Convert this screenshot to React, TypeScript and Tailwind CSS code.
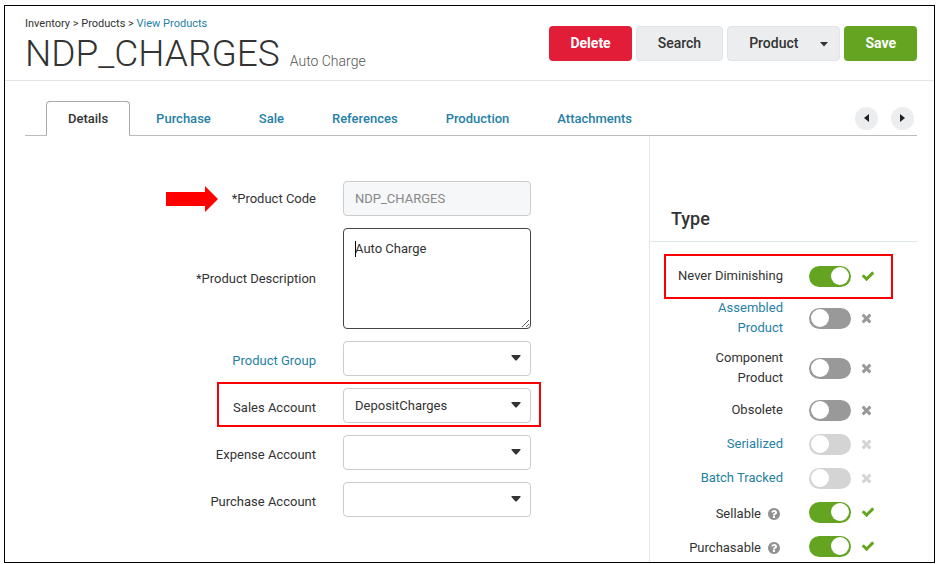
import { useState, type ReactNode } from "react";
import clsx from "clsx";

type TypeFlag = {
  id: string;
  label: string;
  on: boolean;
  link?: boolean;
  disabled?: boolean;
  help?: boolean;
  tall?: boolean;
  marked?: boolean;
};

const tabs = ["Details", "Purchase", "Sale", "References", "Production", "Attachments"];

const typeFlags: TypeFlag[] = [
  { id: "never-diminishing", label: "Never Diminishing", on: true, marked: true },
  { id: "assembled", label: "Assembled Product", on: false, link: true, tall: true },
  { id: "component", label: "Component Product", on: false, tall: true },
  { id: "obsolete", label: "Obsolete", on: false },
  { id: "serialized", label: "Serialized", on: false, link: true, disabled: true },
  { id: "batch-tracked", label: "Batch Tracked", on: false, link: true, disabled: true },
  { id: "sellable", label: "Sellable", on: true, help: true },
  { id: "purchasable", label: "Purchasable", on: true, help: true },
];

const accounts = [
  { id: "group", label: "Product Group", value: "", link: true },
  { id: "sales", label: "Sales Account", value: "DepositCharges", marked: true },
  { id: "expense", label: "Expense Account", value: "" },
  { id: "purchase", label: "Purchase Account", value: "" },
];

function CheckIcon() {
  return (
    <svg viewBox="0 0 1792 1792" className="size-[14px] fill-[#64a421]" aria-hidden="true">
      <path d="M1671 566q0 40-28 68l-724 724-136 136q-28 28-68 28t-68-28l-136-136-362-362q-28-28-28-68t28-68l136-136q28-28 68-28t68 28l294 295 656-657q28-28 68-28t68 28l136 136q28 28 28 68z" />
    </svg>
  );
}

function TimesIcon({ faded }: { faded?: boolean }) {
  return (
    <svg
      viewBox="192 0 1408 1792"
      className={clsx("h-[14px] w-[11px]", faded ? "fill-[#d4d4d4]" : "fill-[#999999]")}
      aria-hidden="true"
    >
      <path d="M1490 1322q0 40-28 68l-136 136q-28 28-68 28t-68-28l-294-294-294 294q-28 28-68 28t-68-28l-136-136q-28-28-28-68t28-68l294-294-294-294q-28-28-28-68t28-68l136-136q28-28 68-28t68 28l294 294 294-294q28-28 68-28t68 28l136 136q28 28 28 68t-28 68l-294 294 294 294q28 28 28 68z" />
    </svg>
  );
}

function HelpIcon() {
  return (
    <svg viewBox="128 128 1536 1536" className="mr-[3px] size-3 shrink-0 fill-[#919191]" aria-hidden="true">
      <path d="M1024 1376v-192q0-14-9-23t-23-9h-192q-14 0-23 9t-9 23v192q0 14 9 23t23 9h192q14 0 23-9t9-23zm256-672q0-88-55.500-163t-138.500-116-170-41q-243 0-371 213-15 24 8 42l132 100q7 6 19 6 16 0 25-12 53-68 86-92 34-24 86-24 48 0 85.500 26t37.500 59q0 38-20 61t-68 45q-63 28-115.500 86.500t-52.500 125.500v36q0 14 9 23t23 9h192q14 0 23-9t9-23q0-19 21.500-49.500t54.500-49.500q32-18 49-28.500t46-35 44.500-48 28-60.500 12.500-81zm384 192q0 209-103 385.500t-279.500 279.500-385.500 103-385.500-103-279.500-279.500-103-385.500 103-385.500 279.500-279.500 385.500-103 385.500 103 279.500 279.500 103 385.500z" />
    </svg>
  );
}

function Field({
  id,
  label,
  link,
  lead,
  labelClass,
  children,
}: {
  id: string;
  label: string;
  link?: boolean;
  lead?: ReactNode;
  labelClass?: string;
  children: ReactNode;
}) {
  return (
    <div className="relative flex items-center gap-[27px]">
      <div className={clsx("flex w-[291px] shrink-0 items-center justify-end gap-[14px]", labelClass)}>
        {lead}
        <label htmlFor={id} className={clsx("leading-5", link && "text-[#267fa5]")}>
          {label}
        </label>
      </div>
      {children}
    </div>
  );
}

function TypeRow({ flag, onToggle }: { flag: TypeFlag; onToggle: () => void }) {
  return (
    <li className={clsx("relative flex items-center pl-[21px]", flag.tall ? "h-10" : "h-6")}>
      <div className={clsx("flex w-28 items-center justify-end gap-[7px]", flag.help && "pt-[3px]")}>
        <label
          htmlFor={flag.id}
          className={clsx("text-right leading-5", flag.link && "text-[#267fa5]", flag.tall && "w-20")}
        >
          {flag.label}
        </label>
        {flag.help && <HelpIcon />}
      </div>
      <input
        id={flag.id}
        type="checkbox"
        role="switch"
        checked={flag.on}
        disabled={flag.disabled}
        onChange={onToggle}
        className="mr-[10px] ml-[26px] flex h-[21px] w-[42px] shrink-0 appearance-none items-center rounded-full bg-[#999999] px-[2px] before:size-[18px] before:rounded-full before:bg-white checked:justify-end checked:bg-[#64a421] disabled:bg-[#d4d4d4]"
      />
      {flag.on ? <CheckIcon /> : <TimesIcon faded={flag.disabled} />}
      {flag.marked && (
        <span className="pointer-events-none absolute -top-[10px] left-[14px] h-[45px] w-[229px] border-2 border-[#fb0000]" />
      )}
    </li>
  );
}

export default function App() {
  const [tab, setTab] = useState("Details");
  const [flags, setFlags] = useState(typeFlags);
  const [description, setDescription] = useState("Auto Charge");

  function toggle(id: string) {
    setFlags((fs) => fs.map((f) => (f.id === id ? { ...f, on: !f.on } : f)));
  }

  return (
    <div className="bg-white pt-[5px] pr-[3px] pb-px pl-1 font-['Roboto',sans-serif] text-[13px] text-[#333333]">
      <main className="border border-black">
        <header className="flex items-center justify-between border-b border-[#dfe5e9] pr-[17px] pl-5">
          <div className="pt-[10px] pb-1">
            <nav className="text-[11px] leading-4">
              Inventory &gt; Products &gt;{" "}
              <a href="#products" className="text-[#267fa5]">
                View Products
              </a>
            </nav>
            <div className="flex items-baseline gap-[10px]">
              <h1 className="text-[37px] leading-[44px] font-light">NDP_CHARGES</h1>
              <span className="text-sm font-light text-[#555555]">Auto Charge</span>
            </div>
          </div>
          <div className="flex gap-1 text-sm font-medium">
            <button type="button" className="h-[35px] rounded bg-[#e11d38] px-[21px] font-bold text-white">
              Delete
            </button>
            <button type="button" className="h-[35px] rounded border border-[#dfe5e9] bg-[#ecedef] px-[21px]">
              Search
            </button>
            <button
              type="button"
              className="flex h-[35px] items-center gap-[22px] rounded border border-[#dfe5e9] bg-[#ecedef] pr-[11px] pl-[21px]"
            >
              Product
              <svg viewBox="0 0 8 5" className="mt-[2px] h-[5px] w-2 fill-[#333333]" aria-hidden="true">
                <path d="M0 0h8L4 4.500z" />
              </svg>
            </button>
            <button type="button" className="h-[35px] rounded bg-[#64a421] px-[21px] font-bold text-white">
              Save
            </button>
          </div>
        </header>

        <div className="pt-5 pr-[17px] pl-5">
          <div className="flex items-center justify-between border-b border-[#bbbbbb] pr-[3px] pl-[21px]">
            <div role="tablist" className="-mb-px flex gap-1">
              {tabs.map((t) => (
                <button
                  key={t}
                  type="button"
                  role="tab"
                  aria-selected={t === tab}
                  onClick={() => setTab(t)}
                  className={clsx(
                    "h-[35px] rounded-t border px-[21px] font-medium",
                    t === tab ? "border-[#aaaaaa] border-b-white bg-white" : "border-transparent text-[#267fa5]",
                  )}
                >
                  {t}
                </button>
              ))}
            </div>
            <div className="flex gap-[13px]">
              <button
                type="button"
                aria-label="Previous tab"
                className="flex size-[23px] items-center justify-center rounded-full bg-[#ecedef]"
              >
                <svg viewBox="0 0 5 8" className="h-2 w-[5px] fill-[#222222]" aria-hidden="true">
                  <path d="M5 0v8L0 4z" />
                </svg>
              </button>
              <button
                type="button"
                aria-label="Next tab"
                className="flex size-[23px] items-center justify-center rounded-full bg-[#ecedef]"
              >
                <svg viewBox="0 0 5 8" className="h-2 w-[5px] fill-[#222222]" aria-hidden="true">
                  <path d="M0 0v8l5-4z" />
                </svg>
              </button>
            </div>
          </div>

          <div className="flex">
            <form className="flex flex-1 flex-col gap-3 pt-[45px]">
              <Field
                id="code"
                label="*Product Code"
                lead={
                  <svg viewBox="0 0 52 26" className="h-[26px] w-[52px] fill-[#ff0000]" aria-hidden="true">
                    <path d="M0 6h39V0l13 13-13 13v-6H0z" />
                  </svg>
                }
              >
                <input
                  id="code"
                  type="text"
                  readOnly
                  value="NDP_CHARGES"
                  className="h-[35px] w-[188px] rounded border border-[#cccccc] bg-[#f5f7f9] px-[11px] text-[#888888]"
                />
              </Field>

              <Field id="description" label="*Product Description">
                <div className="relative h-[101px] w-[188px]">
                  <textarea
                    id="description"
                    value={description}
                    onChange={(e) => setDescription(e.target.value)}
                    className="block size-full resize rounded border border-[#444444] px-[11px] py-[10px] leading-5"
                  />
                  <span className="pointer-events-none absolute top-[13px] left-3 h-4 w-px bg-black" />
                </div>
              </Field>

              {accounts.map((a) => (
                <Field key={a.id} id={a.id} label={a.label} link={a.link} labelClass="pt-[5px]">
                  <div className="relative w-[188px]">
                    <select
                      id={a.id}
                      defaultValue={a.value}
                      className="block h-[35px] w-full appearance-none rounded border border-[#cccccc] bg-white px-[11px]"
                    >
                      <option value={a.value}>{a.value}</option>
                    </select>
                    <svg
                      viewBox="0 0 10 6"
                      className="pointer-events-none absolute top-[14px] right-[10px] h-[6px] w-[10px] fill-[#333333]"
                      aria-hidden="true"
                    >
                      <path d="M1 0h8q1 0 .5 1L6 5Q5 6 4 5L.5 1Q0 0 1 0z" />
                    </svg>
                  </div>
                  {a.marked && (
                    <span className="pointer-events-none absolute -top-[6px] left-[192px] h-[45px] w-[324px] border-2 border-[#fb0000]" />
                  )}
                </Field>
              ))}
            </form>

            <aside className="w-[268px] border-l border-[#dfe6e6] pb-1">
              <h2 className="border-b border-[#dfe6e6] pt-[71px] pb-[10px] pl-[21px] text-lg leading-6 font-medium">
                Type
              </h2>
              <ul className="flex flex-col gap-[10px] pt-[22px]">
                {flags.map((f) => (
                  <TypeRow key={f.id} flag={f} onToggle={() => toggle(f.id)} />
                ))}
              </ul>
            </aside>
          </div>
        </div>
      </main>
    </div>
  );
}
